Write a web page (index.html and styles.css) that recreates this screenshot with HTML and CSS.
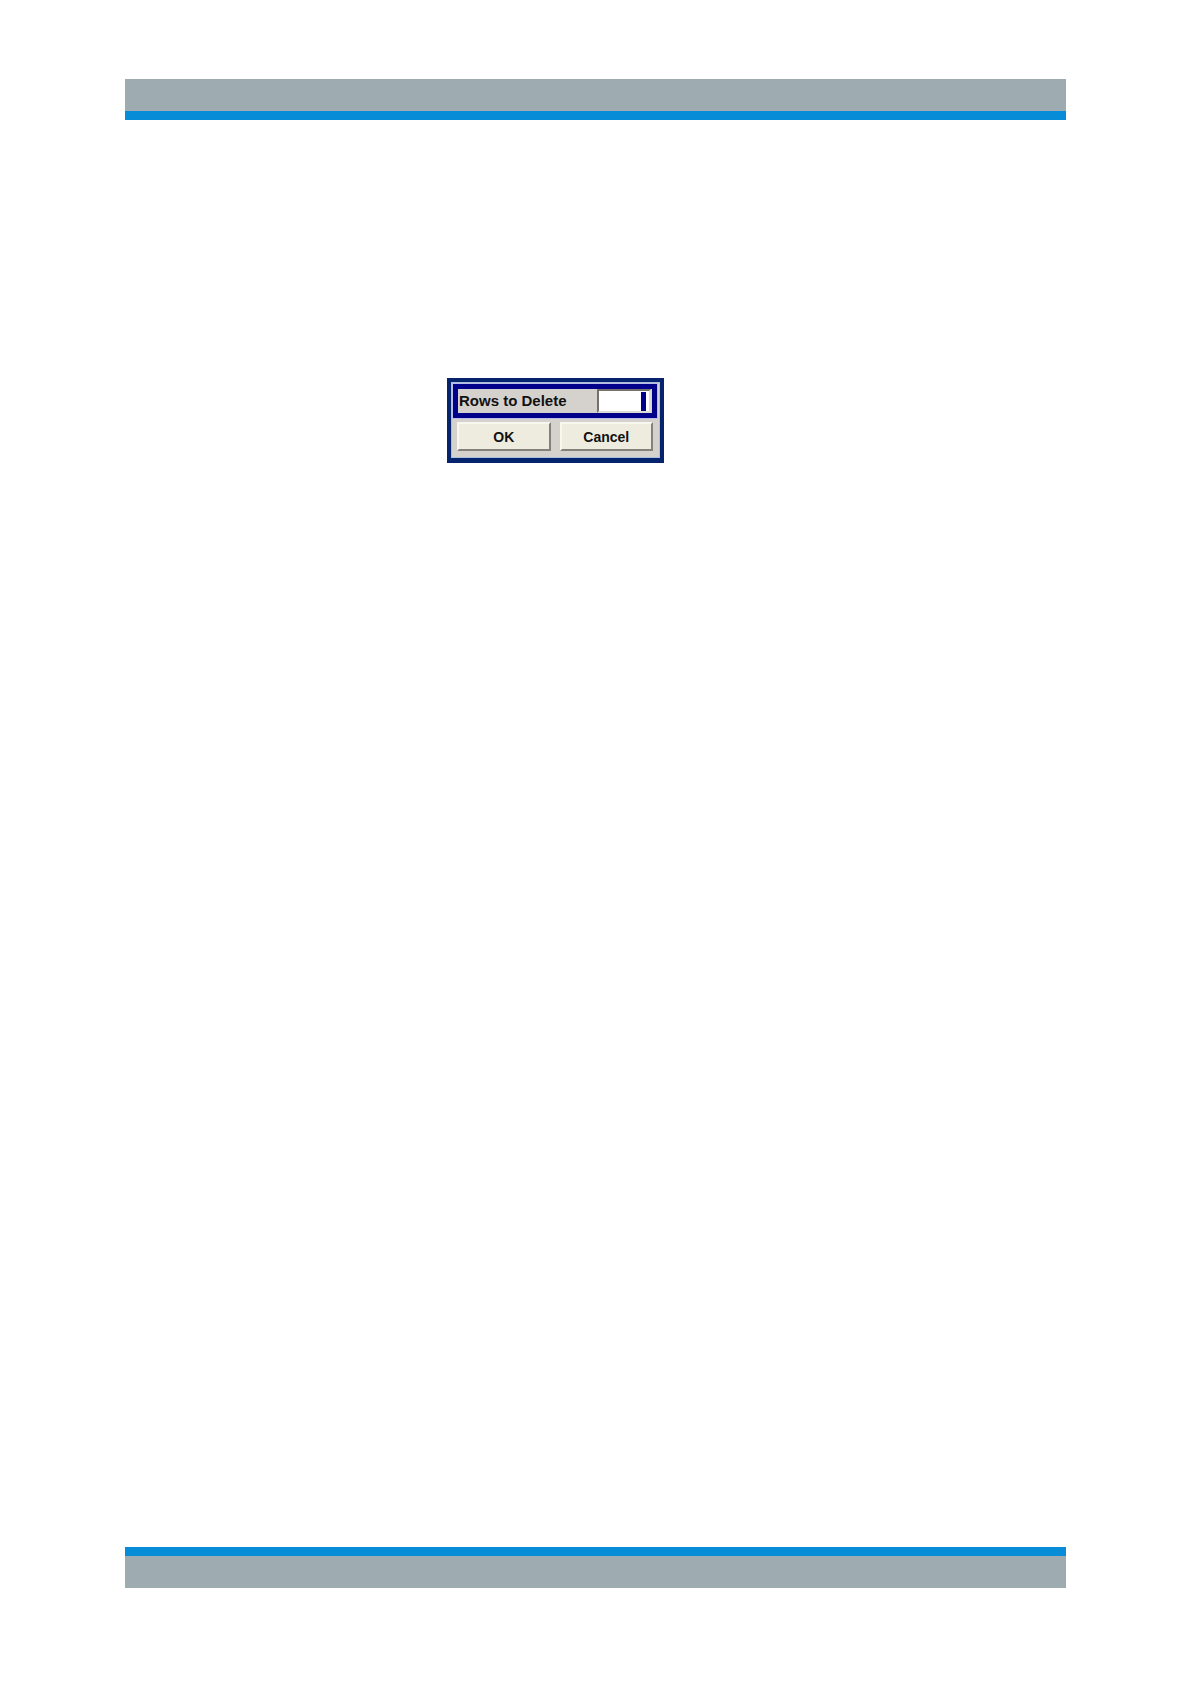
FILE: index.html
```html
<!DOCTYPE html>
<html lang="en">
<head>
<meta charset="utf-8">
<meta name="viewport" content="width=device-width, initial-scale=1">
<title>Rows to Delete</title>
<link rel="stylesheet" href="styles.css">
</head>
<body>
<div class="page">
  <header class="band band-top"></header>
  <main class="content">
    <form class="dialog">
      <div class="field">
        <label class="label" for="rows">Rows to Delete</label>
        <input class="entry" id="rows" type="text" inputmode="numeric">
      </div>
      <div class="actions">
        <button class="button" type="button">OK</button>
        <button class="button" type="button">Cancel</button>
      </div>
    </form>
  </main>
  <footer class="band band-bottom"></footer>
</div>
</body>
</html>
```

FILE: styles.css
```css
* {
  box-sizing: border-box;
}

body {
  margin: 0;
  background: #fff;
  color: #111;
  font-family: "Liberation Sans", Arial, sans-serif;
}

.page {
  display: flex;
  flex-direction: column;
  min-height: 100vh;
  padding: 79px 125px 96px;
}

.band {
  height: 41px;
  background: #9eabb0;
}

.band-top {
  border-bottom: 9px solid #078dd8;
}

.band-bottom {
  border-top: 9px solid #078dd8;
}

.content {
  flex: 1;
  padding: 258px 0 0 322px;
}

.dialog {
  display: flex;
  flex-direction: column;
  gap: 4px;
  width: 217px;
  padding: 2px 3px 2px 2px;
  border: 4px solid #06246e;
  border-bottom-width: 5px;
  background: #d5d2ce;
  box-shadow: inset 0 0 0 1px #a9c0dc;
}

.field {
  display: flex;
  align-items: center;
  justify-content: space-between;
  padding: 0 1px;
  border: 5px solid #00008b;
  outline: 1px solid #bcbce8;
}

.label {
  font-size: 15px;
  line-height: 24px;
  font-weight: bold;
}

/* The block cursor rests at the right edge of the entry. */
.entry {
  width: 54px;
  height: 24px;
  padding: 0 8px;
  border: 2px solid;
  border-color: #77716d #dedad4 #dedad4 #77716d;
  border-radius: 0;
  background: linear-gradient(#00008b, #00008b) right 3px center / 5px 19px no-repeat #fff;
  font: bold 14px "Liberation Sans", Arial, sans-serif;
  text-align: right;
  outline: none;
}

.actions {
  display: grid;
  grid-template-columns: 1fr 1fr;
  gap: 9px;
  padding: 0 4px 5px;
}

.button {
  height: 29px;
  padding: 0;
  border: 2px solid;
  border-color: #f8f7ee #84817b #84817b #f8f7ee;
  border-radius: 0;
  background: #eeecdf;
  color: #111;
  font: bold 14px "Liberation Sans", Arial, sans-serif;
}
```
